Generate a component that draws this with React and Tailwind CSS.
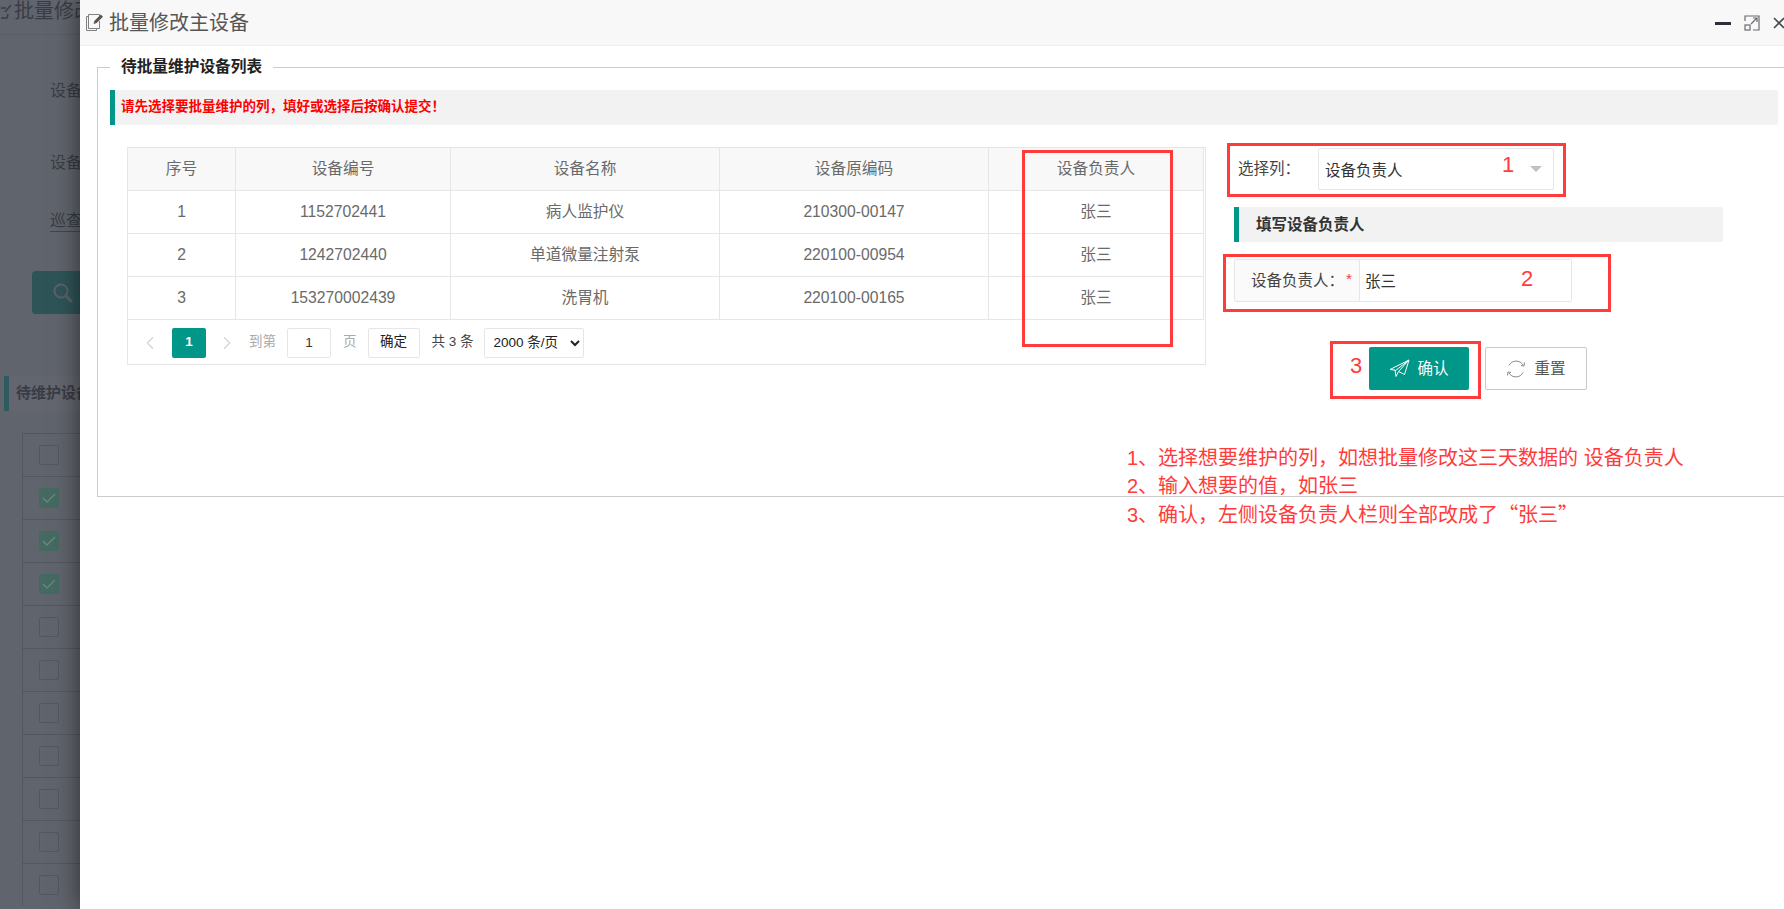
import React from "react";
import { ChevronLeft, ChevronRight } from "lucide-react";

const FONT = "font-['Liberation_Sans','Noto_Sans_CJK_SC',sans-serif]";
const COLS = ["w-[108px]", "w-[215px]", "w-[269px]", "w-[269px]", "w-[215px]"];
const HEAD = ["序号", "设备编号", "设备名称", "设备原编码", "设备负责人"];
const ROWS = [
  ["1", "1152702441", "病人监护仪", "210300-00147", "张三"],
  ["2", "1242702440", "单道微量注射泵", "220100-00954", "张三"],
  ["3", "153270002439", "洗胃机", "220100-00165", "张三"],
];
const CHECKS = [false, true, true, true, false, false, false, false, false, false, false];

function Backdrop() {
  return (
    <div className="w-[80px] h-[909px] shrink-0 overflow-hidden bg-[#60646c] text-[#3a3c44]">
      <div className="h-[35px] border-b border-[#5a5d66] flex items-start whitespace-nowrap pl-[1px] text-[20px] leading-[22px]">
        <svg width="11" height="18" viewBox="0 0 11 18" className="mt-[3px] mr-[2px] shrink-0" fill="none" stroke="#3a3c44" strokeWidth="1.4">
          <path d="M0 5h5M0 15h6l1-4M10 2L4 9" />
        </svg>
        <span>批量修改主设备</span>
      </div>
      <div className="ml-[50px] mt-[44px] text-[16px] leading-[24px] whitespace-nowrap">设备编号</div>
      <div className="ml-[50px] mt-[48px] text-[16px] leading-[24px] whitespace-nowrap">设备名称</div>
      <div className="ml-[50px] mt-[35px] text-[16px] leading-[21px] whitespace-nowrap border-b border-[#43454c]">巡查周期</div>
      <div className="ml-[32px] mt-[39px] w-[70px] h-[43px] rounded-l-[4px] bg-[#2f5458] flex items-center pl-[21px]">
        <svg width="20" height="20" viewBox="0 0 20 20" fill="none" stroke="#5a6268" strokeWidth="2">
          <circle cx="8" cy="8" r="6.500" />
          <path d="M13 13l6 6" strokeWidth="3" />
        </svg>
      </div>
      <div className="mt-[62px] ml-[4px] h-[35px] border-l-[5px] border-[#2f5a5f] bg-[#63666f] pl-[7px] flex items-center text-[15px] font-bold whitespace-nowrap">
        待维护设备列表
      </div>
      <div className="mt-[22px] ml-[22px] border-l border-[#54575f]">
        {CHECKS.map((c, i) => (
          <div key={i} className="h-[43px] border-t border-[#54575f] pl-[16px] flex items-center">
            <div
              className={
                c
                  ? "w-[20px] h-[20px] rounded-[2px] bg-[#456a62] flex items-center justify-center"
                  : "w-[20px] h-[20px] rounded-[2px] border border-[#54575f]"
              }
            >
              {c && (
                <svg width="14" height="10" viewBox="0 0 14 10" fill="none" stroke="#6b8580" strokeWidth="1.4">
                  <path d="M1 5l4 4 8-8" />
                </svg>
              )}
            </div>
          </div>
        ))}
      </div>
    </div>
  );
}

function ModalHeader() {
  return (
    <div className="h-[46px] shrink-0 bg-[#f8f8f8] border-b border-[#eeeeee] flex items-center pl-[5px] overflow-hidden">
      <svg width="19" height="19" viewBox="0 0 19 19" fill="none" stroke="#808080" strokeWidth="1" className="mr-[5px] shrink-0">
        <path d="M3.500 3.500h-2v14h10v-2" />
        <path d="M3.500 15.500v-14h11v2M14.500 8v7.500h-11" />
        <path d="M8.500 11l1-3.200 6.300-6.300 2.200 2.200-6.300 6.300z" fill="#555" stroke="none" />
      </svg>
      <span className="text-[20px] leading-[24px] text-[#555]">批量修改主设备</span>
      <div className="ml-auto flex items-center shrink-0">
        <div className="w-[16px] h-[3px] bg-[#2e2d3c] mr-[13px] mt-[1px]" />
        <svg width="16" height="16" viewBox="0 0 16 16" fill="none" stroke="#6a6a72" strokeWidth="1.2" className="mr-[13px]">
          <path d="M1 6V1h14v14H9" />
          <rect x="1" y="10" width="5" height="5" />
          <path d="M7 9l6-6M9 3h4v4" />
        </svg>
        <svg width="11" height="12" viewBox="0 0 11 12" fill="none" stroke="#4a4a52" strokeWidth="1.6">
          <path d="M1 1l10 10M11 1L1 11" />
        </svg>
      </div>
    </div>
  );
}

function DeviceTable() {
  return (
    <div className="w-[1079px] h-[218px] shrink-0 border border-[#e6e6e6] text-[#6a6a6a]">
      <table className="table-fixed border-separate border-spacing-0 w-[1076px] text-center text-[15.700px]">
        <colgroup>
          {COLS.map((c, i) => (
            <col key={i} className={c} />
          ))}
        </colgroup>
        <thead>
          <tr>
            {HEAD.map((h) => (
              <th key={h} className="h-[43px] p-0 font-normal bg-[#f8f8f8] border-r border-b border-[#e6e6e6]">
                {h}
              </th>
            ))}
          </tr>
        </thead>
        <tbody>
          {ROWS.map((r) => (
            <tr key={r[0]}>
              {r.map((c, i) => (
                <td key={i} className="h-[43px] p-0 border-r border-b border-[#e6e6e6]">
                  {c}
                </td>
              ))}
            </tr>
          ))}
        </tbody>
      </table>
      <Pagination />
    </div>
  );
}

function Pagination() {
  return (
    <div className="h-[44px] flex items-center pt-[1px] pl-[11px] text-[13.500px]">
      <ChevronLeft size={22} strokeWidth={1.2} className="text-[#d2d2d2]" />
      <div className="ml-[11px] w-[34px] h-[30px] rounded-[2px] bg-[#009688] text-white font-bold flex items-center justify-center">1</div>
      <ChevronRight size={22} strokeWidth={1.2} className="ml-[10px] text-[#d2d2d2]" />
      <span className="ml-[11px] text-[#aaaaaa]">到第</span>
      <input
        readOnly
        value="1"
        className="ml-[11px] w-[44px] h-[30px] rounded-[2px] border border-[#e6e6e6] text-center text-[#333] outline-none"
      />
      <span className="ml-[12px] text-[#aaaaaa]">页</span>
      <button className="ml-[11px] w-[52px] h-[30px] rounded-[2px] border border-[#e6e6e6] bg-white text-[#222]">确定</button>
      <span className="ml-[12px] w-[43px] whitespace-nowrap text-[#444]">共 3 条</span>
      <select className="ml-[9px] w-[100px] h-[30px] rounded-[2px] border border-[#e6e6e6] bg-white text-[#222] pl-[5px] outline-none">
        <option>2000 条/页</option>
      </select>
    </div>
  );
}

function RightPanel() {
  return (
    <div className="ml-[28px] w-[489px] shrink-0">
      <div className="mt-[1px] h-[42px] flex items-center pl-[4px]">
        <span className="w-[80px] text-[15.500px] text-[#444]">选择列：</span>
        <div className="w-[236px] h-[42px] rounded-[2px] border border-[#e6e6e6] bg-white flex items-center justify-between pl-[6px] pr-[11px]">
          <span className="pt-[3px] text-[15.500px] text-[#333]">设备负责人</span>
          <div className="w-0 h-0 border-x-[6px] border-x-transparent border-t-[6px] border-t-[#c2c2c2]" />
        </div>
      </div>
      <div className="mt-[17px] h-[35px] rounded-r-[2px] border-l-[5px] border-[#009688] bg-[#f2f2f2] flex items-center pl-[17px] text-[15.500px] font-bold text-[#333]">
        填写设备负责人
      </div>
      <div className="mt-[17px] w-[338px] h-[43px] flex">
        <div className="w-[126px] shrink-0 rounded-l-[2px] border border-[#e6e6e6] bg-[#fafafa] flex items-center pl-[16px] text-[15.500px] text-[#444] whitespace-nowrap">
          设备负责人：
          <span className="ml-[2px] mt-[-4px] text-[#ff3b3b]">*</span>
        </div>
        <input
          readOnly
          value="张三"
          className="flex-1 min-w-0 rounded-r-[2px] border border-l-0 border-[#e6e6e6] bg-white pl-[5px] pt-[2px] text-[15.500px] text-[#333] outline-none"
        />
      </div>
      <div className="mt-[45px] ml-[135px] flex">
        <button className="w-[100px] h-[43px] rounded-[2px] bg-[#009688] text-white text-[15.500px] flex items-center justify-center">
          <svg width="21" height="19" viewBox="0 0 21 19" fill="none" stroke="#ffffff" strokeWidth="1" strokeLinejoin="round" className="mr-[7px]">
            <path d="M1 10.500L20 1l-4.500 14.500-6-3-2.500 5-1-6.500z" />
            <path d="M20 1L6 12M20 1L9.500 12.500" />
          </svg>
          确认
        </button>
        <button className="ml-[16px] w-[102px] h-[43px] rounded-[2px] border border-[#c9c9c9] bg-white text-[#555] text-[15.500px] flex items-center justify-center">
          <svg width="20" height="20" viewBox="0 0 20 20" fill="none" stroke="#888" strokeWidth="1" className="mr-[8px]">
            <path d="M3 6.500A8 8 0 0 1 17 6M17 13.500A8 8 0 0 1 3 14" />
            <path d="M15 6.500l3 .5.500-3.500M5 13.500l-3-.5-.500 3.500" />
          </svg>
          重置
        </button>
      </div>
    </div>
  );
}

function Fieldset() {
  return (
    <fieldset className="mt-[9px] ml-[17px] h-[442px] border border-r-0 border-[#cccccc]">
      <legend className="ml-[12px] px-[11px] text-[15.700px] leading-[24px] font-bold text-[#222]">待批量维护设备列表</legend>
      <div className="mt-[11px] ml-[12px] mr-[6px] h-[35px] rounded-r-[2px] border-l-[5px] border-[#009688] bg-[#f2f2f2] flex items-center pl-[6px] text-[13.500px] font-bold text-[#ff0000]">
        请先选择要批量维护的列，填好或选择后按确认提交！
      </div>
      <div className="mt-[22px] ml-[29px] flex">
        <DeviceTable />
        <RightPanel />
      </div>
    </fieldset>
  );
}

function RedBox({ className }) {
  return <div className={"absolute border-[3px] border-[#ff3b3b] pointer-events-none " + className} />;
}

function Annotations() {
  return (
    <>
      <RedBox className="left-[1022px] top-[150px] w-[151px] h-[197px]" />
      <RedBox className="left-[1227px] top-[143px] w-[339px] h-[54px]" />
      <RedBox className="left-[1223px] top-[254px] w-[388px] h-[58px]" />
      <RedBox className="left-[1330px] top-[341px] w-[151px] h-[58px]" />
      <span className="absolute left-[1502px] top-[150px] text-[22px] leading-[30px] text-[#ff3b3b]">1</span>
      <span className="absolute left-[1521px] top-[264px] text-[22px] leading-[30px] text-[#ff3b3b]">2</span>
      <span className="absolute left-[1350px] top-[351px] text-[22px] leading-[30px] text-[#ff3b3b]">3</span>
      <div className="absolute left-[1127px] top-[445px] text-[20px] leading-[27.500px] text-[#ff3b3b] whitespace-nowrap">
        <div>1、选择想要维护的列，如想批量修改这三天数据的 设备负责人</div>
        <div>2、输入想要的值，如张三</div>
        <div>
          3、确认，左侧设备负责人栏则全部改成了
          <span className="font-['Noto_Sans_CJK_SC',sans-serif]">“张三”</span>
        </div>
      </div>
    </>
  );
}

export default function App() {
  return (
    <div className={"relative w-[1784px] h-[909px] overflow-hidden flex bg-white " + FONT}>
      <Backdrop />
      <div className="relative z-10 flex-1 min-w-0 h-[909px] bg-white flex flex-col shadow-[0_0_24px_rgba(0,0,0,0.55)]">
        <ModalHeader />
        <Fieldset />
      </div>
      <div className="absolute inset-0 z-20 pointer-events-none">
        <Annotations />
      </div>
    </div>
  );
}
